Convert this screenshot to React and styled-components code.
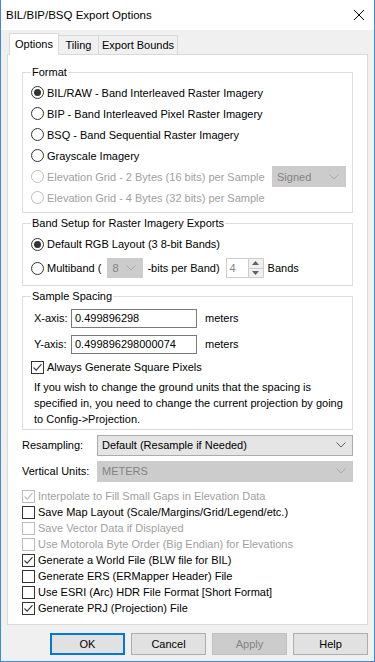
import React from "react"
import styled, { createGlobalStyle } from "styled-components"

const GlobalStyle = createGlobalStyle`
  html, body {
    margin: 0;
    padding: 0;
    background: #ffffff;
  }
  body {
    font-family: "Liberation Sans", Arial, sans-serif;
    font-size: 11px;
    color: #000000;
  }
  * {
    box-sizing: border-box;
  }
`

const Window = styled.div`
  width: 375px;
  height: 662px;
  display: flex;
  flex-direction: column;
  background: #f0f0f0;
  border: 1px solid #3b8bd9;
  border-top: none;
`

const TitleBar = styled.div`
  height: 30px;
  flex: none;
  display: flex;
  align-items: center;
  justify-content: space-between;
  background: #ffffff;
  padding-left: 5px;
`

const Title = styled.span`
  font-size: 11.5px;
`

const CloseButton = styled.div`
  width: 30px;
  height: 30px;
  display: flex;
  align-items: center;
  justify-content: center;
`

const Body = styled.div`
  flex: 1;
  display: flex;
  flex-direction: column;
  padding: 3px 6px 0;
`

const TabStrip = styled.div`
  display: flex;
  align-items: flex-end;
  height: 21px;
  padding-left: 2px;
`

const Tab = styled.div`
  width: ${(p) => p.$w}px;
  height: ${(p) => (p.$active ? 22 : 19)}px;
  margin-bottom: ${(p) => (p.$active ? -1 : 0)}px;
  margin-left: ${(p) => (p.$first ? 0 : -1)}px;
  display: flex;
  align-items: center;
  justify-content: center;
  background: ${(p) => (p.$active ? "#ffffff" : "#f0f0f0")};
  border: 1px solid #d9d9d9;
  border-bottom: none;
  position: relative;
  z-index: ${(p) => (p.$active ? 1 : 0)};
  padding-bottom: ${(p) => (p.$active ? 2 : 0)}px;
`

const Page = styled.div`
  height: 571px;
  display: flex;
  flex-direction: column;
  background: #ffffff;
  border: 1px solid #d9d9d9;
  padding: 9px 14px 0 14px;
`

const Group = styled.fieldset`
  margin: ${(p) => p.$top || 0}px 0 0;
  padding: ${(p) => p.$pt || 0}px 6px ${(p) => p.$pb || 0}px 8px;
  border: 1px solid #dcdcdc;
  min-width: 0;
`

const Legend = styled.legend`
  padding: 0 1px;
  line-height: 16px;
`

const Row = styled.div`
  height: ${(p) => p.$h || 21}px;
  display: flex;
  align-items: center;
  color: ${(p) => (p.$disabled ? "#a0a0a0" : "#000000")};
  white-space: nowrap;
`

const Spacer = styled.div`
  flex: 1;
`

const RadioCircle = styled.span`
  width: 13px;
  height: 13px;
  flex: none;
  border-radius: 50%;
  border: 1px solid ${(p) => (p.$disabled ? "#bcbcbc" : "#333333")};
  background: #ffffff;
  display: flex;
  align-items: center;
  justify-content: center;
  margin-right: 3px;
  &::after {
    content: "";
    width: 7px;
    height: 7px;
    border-radius: 50%;
    background: #333333;
    display: ${(p) => (p.$checked ? "block" : "none")};
  }
`

const Box = styled.span`
  width: 13px;
  height: 13px;
  flex: none;
  border: 1px solid ${(p) => (p.$disabled ? "#bcbcbc" : "#333333")};
  background: #ffffff;
  display: flex;
  align-items: center;
  justify-content: center;
  margin-right: 3px;
`

const Combo = styled.div`
  width: ${(p) => p.$w}px;
  height: ${(p) => p.$h || 21}px;
  margin: ${(p) => p.$m || 0};
  display: flex;
  align-items: center;
  justify-content: space-between;
  padding: 0 6px 0 4px;
  background: ${(p) => (p.$disabled ? "#cccccc" : "#e5e5e5")};
  border: 1px solid ${(p) => (p.$disabled ? "#cccccc" : "#acacac")};
  color: ${(p) => (p.$disabled ? "#838383" : "#000000")};
  flex: none;
`

const TextInput = styled.div`
  width: 126px;
  height: 19px;
  border: 1px solid #7a7a7a;
  display: flex;
  align-items: center;
  padding-left: 3px;
  margin-right: 8px;
  background: #ffffff;
`

const AxisLabel = styled.span`
  width: 40px;
  padding-left: 3px;
`

const Spin = styled.div`
  display: flex;
  height: 20px;
  margin: 0 4px 0 6px;
`

const SpinText = styled.div`
  width: 22px;
  border: 1px solid #cccccc;
  border-right: none;
  color: #838383;
  display: flex;
  align-items: center;
  padding-left: 3px;
`

const SpinButtons = styled.div`
  width: 16px;
  display: flex;
  flex-direction: column;
  border: 1px solid #cccccc;
`

const SpinArrow = styled.div`
  flex: 1;
  background: #f0f0f0;
  display: flex;
  align-items: center;
  justify-content: center;
  & + & {
    border-top: 1px solid #cccccc;
  }
`

const Note = styled.p`
  margin: 2px 0 0;
  padding-left: 3px;
  line-height: 16px;
  white-space: nowrap;
`

const FieldRow = styled.div`
  height: 26px;
  display: flex;
  align-items: center;
`

const FieldLabel = styled.span`
  width: 75px;
  flex: none;
`

const CheckList = styled.div`
  display: flex;
  flex-direction: column;
  margin-top: 4px;
`

const Footer = styled.div`
  flex: 1;
  display: flex;
  justify-content: flex-end;
  align-items: flex-start;
  gap: 6px;
  padding-top: 8px;
`

const Button = styled.div`
  width: 75px;
  height: 22px;
  display: flex;
  align-items: center;
  justify-content: center;
  background: ${(p) => (p.$disabled ? "#cccccc" : "#e1e1e1")};
  border: ${(p) => (p.$default ? "2px solid #0078d7" : p.$disabled ? "1px solid #bfbfbf" : "1px solid #adadad")};
  color: ${(p) => (p.$disabled ? "#838383" : "#000000")};
`

function Chevron({ color = "#606060" }) {
  return (
    <svg width="10" height="6" viewBox="0 0 10 6">
      <polyline points="0.5,0.5 5,5 9.5,0.5" fill="none" stroke={color} strokeWidth="1" />
    </svg>
  )
}

function Radio({ checked, disabled, children }) {
  return (
    <Row $disabled={disabled}>
      <RadioCircle $checked={checked} $disabled={disabled} />
      {children}
    </Row>
  )
}

function Check({ checked, disabled, children, h = 16 }) {
  const color = disabled ? "#bcbcbc" : "#333333"
  return (
    <Row $h={h} $disabled={disabled}>
      <Box $disabled={disabled}>
        {checked && (
          <svg width="11" height="11" viewBox="0 0 11 11">
            <polyline points="1.5,5.5 4.2,8.2 9.5,2.2" fill="none" stroke={color} strokeWidth="1.1" />
          </svg>
        )}
      </Box>
      {children}
    </Row>
  )
}

function SpinArrowIcon({ up }) {
  return (
    <svg width="7" height="4" viewBox="0 0 7 4">
      <polygon points={up ? "0,4 3.5,0 7,4" : "0,0 3.5,4 7,0"} fill="#606060" />
    </svg>
  )
}

export default function App() {
  return (
    <>
      <GlobalStyle />
      <Window>
        <TitleBar>
          <Title>BIL/BIP/BSQ Export Options</Title>
          <CloseButton>
            <svg width="10" height="10" viewBox="0 0 10 10">
              <path d="M0 0 L10 10 M10 0 L0 10" stroke="#000" strokeWidth="1" />
            </svg>
          </CloseButton>
        </TitleBar>
        <Body>
          <TabStrip>
            <Tab $active $first $w={50}>
              Options
            </Tab>
            <Tab $w={41}>Tiling</Tab>
            <Tab $w={80}>Export Bounds</Tab>
          </TabStrip>
          <Page>
            <Group $pt={2} $pb={4}>
              <Legend>Format</Legend>
              <Radio checked>BIL/RAW - Band Interleaved Raster Imagery</Radio>
              <Radio>BIP - Band Interleaved Pixel Raster Imagery</Radio>
              <Radio>BSQ - Band Sequential Raster Imagery</Radio>
              <Radio>Grayscale Imagery</Radio>
              <Row $disabled>
                <RadioCircle $disabled />
                Elevation Grid - 2 Bytes (16 bits) per Sample
                <Spacer />
                <Combo $w={74} $h={21} $disabled>
                  Signed
                  <Chevron color="#a8a8a8" />
                </Combo>
              </Row>
              <Radio disabled>Elevation Grid - 4 Bytes (32 bits) per Sample</Radio>
            </Group>

            <Group $top={2} $pt={1} $pb={5}>
              <Legend>Band Setup for Raster Imagery Exports</Legend>
              <Row $h={24}>
                <RadioCircle $checked />
                Default RGB Layout (3 8-bit Bands)
              </Row>
              <Row $h={24}>
                <RadioCircle />
                Multiband (
                <Combo $w={36} $h={20} $m="0 4px 0 6px" $disabled>
                  8
                  <Chevron color="#a8a8a8" />
                </Combo>
                -bits per Band)
                <Spin>
                  <SpinText>4</SpinText>
                  <SpinButtons>
                    <SpinArrow>
                      <SpinArrowIcon up />
                    </SpinArrow>
                    <SpinArrow>
                      <SpinArrowIcon />
                    </SpinArrow>
                  </SpinButtons>
                </Spin>
                Bands
              </Row>
            </Group>

            <Group $top={2} $pt={1} $pb={2}>
              <Legend>Sample Spacing</Legend>
              <FieldRow>
                <AxisLabel>X-axis:</AxisLabel>
                <TextInput>0.499896298</TextInput>
                meters
              </FieldRow>
              <FieldRow>
                <AxisLabel>Y-axis:</AxisLabel>
                <TextInput>0.499896298000074</TextInput>
                meters
              </FieldRow>
              <Check checked h={20}>
                Always Generate Square Pixels
              </Check>
              <Note>
                If you wish to change the ground units that the spacing is
                <br />
                specified in, you need to change the current projection by going
                <br />
                to Config-&gt;Projection.
              </Note>
            </Group>

            <FieldRow style={{ marginTop: 2 }}>
              <FieldLabel>Resampling:</FieldLabel>
              <Combo $w={256}>
                Default (Resample if Needed)
                <Chevron />
              </Combo>
            </FieldRow>
            <FieldRow>
              <FieldLabel>Vertical Units:</FieldLabel>
              <Combo $w={256} $disabled>
                METERS
                <Chevron color="#a8a8a8" />
              </Combo>
            </FieldRow>

            <CheckList>
              <Check checked disabled>
                Interpolate to Fill Small Gaps in Elevation Data
              </Check>
              <Check>Save Map Layout (Scale/Margins/Grid/Legend/etc.)</Check>
              <Check disabled>Save Vector Data if Displayed</Check>
              <Check disabled>Use Motorola Byte Order (Big Endian) for Elevations</Check>
              <Check checked>Generate a World File (BLW file for BIL)</Check>
              <Check>Generate ERS (ERMapper Header) File</Check>
              <Check>Use ESRI (Arc) HDR File Format [Short Format]</Check>
              <Check checked>Generate PRJ (Projection) File</Check>
            </CheckList>
          </Page>
          <Footer>
            <Button $default>OK</Button>
            <Button>Cancel</Button>
            <Button $disabled>Apply</Button>
            <Button>Help</Button>
          </Footer>
        </Body>
      </Window>
    </>
  )
}
